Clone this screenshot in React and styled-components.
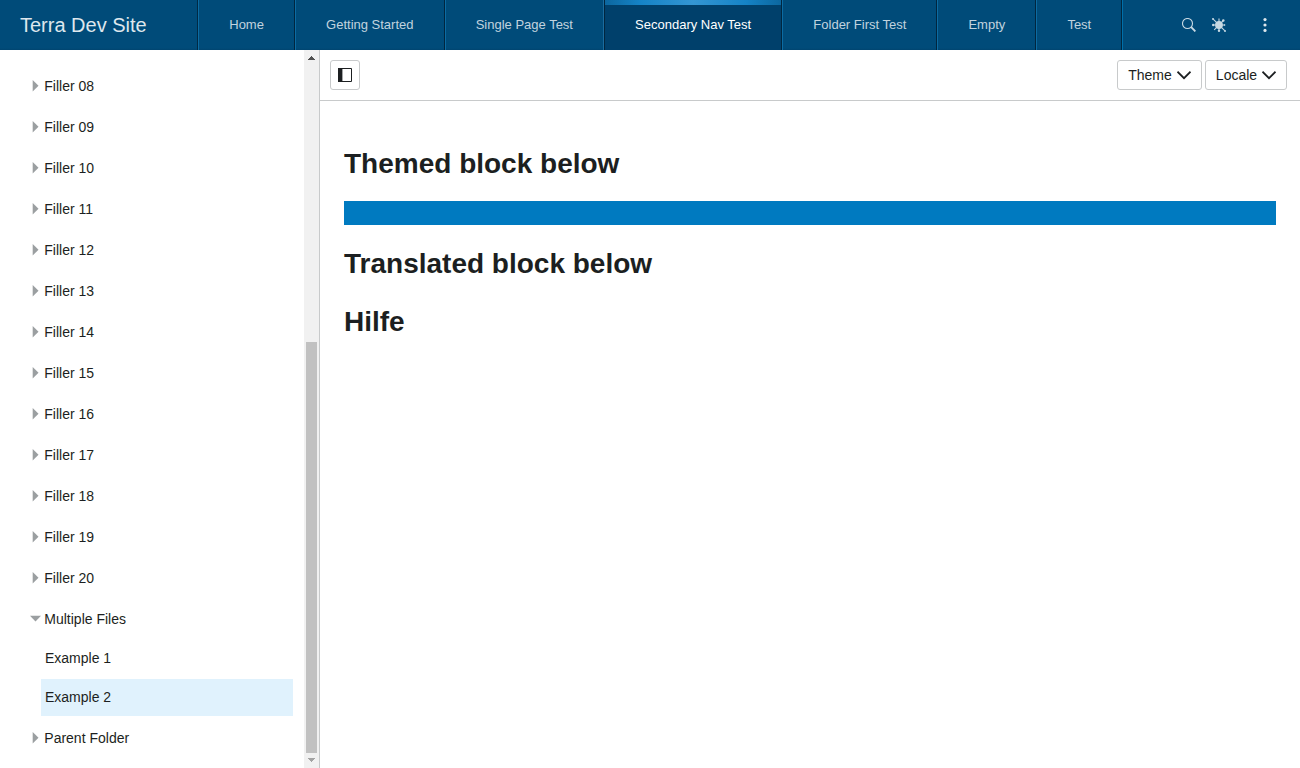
import React from 'react';
import styled, { createGlobalStyle } from 'styled-components';

const GlobalStyle = createGlobalStyle`
  *, *::before, *::after { box-sizing: border-box; }
  body {
    margin: 0;
    background: #fff;
    color: #1c1f21;
    font-family: 'Liberation Sans', Arial, sans-serif;
    font-size: 14px;
  }
  button { font: inherit; color: inherit; margin: 0; cursor: pointer; }
`;

const Page = styled.div`
  display: flex;
  flex-direction: column;
  height: 100vh;
  overflow: hidden;
`;

const Header = styled.header`
  display: flex;
  flex: 0 0 50px;
  background: linear-gradient(to bottom, transparent 48px, rgba(0, 30, 60, 0.15) 50px), #004b79;
  color: #c8dae4;
`;

const Brand = styled.div`
  width: 198.2px;
  padding-left: 20px;
  border-right: 1px solid #002a45;
  font-size: 20px;
  line-height: 50px;
  color: #dee7ed;
`;

const Tabs = styled.nav`
  display: flex;
  border-right: 1px solid #006fa9;
`;

const Tab = styled.a`
  padding: 0 30.07px;
  border-left: 1px solid ${(p) => (p.$active ? '#01263f' : '#0c6ba2')};
  border-right: 1px solid ${(p) => (p.$beforeActive ? '#1b6c9e' : '#01263f')};
  font-size: 13px;
  line-height: 50px;
  white-space: nowrap;
  color: ${(p) => (p.$active ? '#fff' : '#c1d3df')};
  background: ${(p) =>
    p.$active
      ? 'linear-gradient(to right, #0c679f 0%, #1583c6 20%, #3496d3 50%, #1583c6 80%, #0c679f 100%) top / 100% 5px no-repeat, #00406b'
      : 'transparent'};
`;

const Tools = styled.div`
  display: flex;
  align-items: center;
  margin-left: auto;
  padding-right: 28px;
`;

const ToolButton = styled.button`
  display: flex;
  padding: 0;
  border: 0;
  background: none;
  margin-left: ${(p) => p.$gap || 0}px;
`;

const Body = styled.div`
  display: flex;
  flex: 1;
  min-height: 0;
`;

const Sidebar = styled.aside`
  display: flex;
  flex: 0 0 320px;
  border-right: 1px solid #c8cacb;
`;

const Menu = styled.div`
  flex: 1;
  padding: 16px 11px 0 30px;
`;

const MenuRow = styled.div`
  display: flex;
  align-items: center;
  height: 41px;
  padding-bottom: 2px;
  gap: 3.3px;
`;

const ChildList = styled.div`
  display: flex;
  flex-direction: column;
  gap: 2px;
  padding: 0 0 2px 11px;
`;

const ChildRow = styled.div`
  height: 37px;
  padding-left: 4px;
  line-height: 37px;
  background: ${(p) => (p.$selected ? '#e0f2fd' : 'transparent')};
`;

const ScrollTrack = styled.div`
  display: flex;
  flex-direction: column;
  justify-content: space-between;
  width: 15px;
  background: #f1f1f1;
`;

const ScrollThumb = styled.div`
  height: 411px;
  margin: auto 2px 0;
  background: #c1c1c1;
`;

const ScrollArrow = styled.svg`
  display: block;
  width: 15px;
  height: 15px;
`;

const Main = styled.main`
  flex: 1;
  min-width: 0;
`;

const Toolbar = styled.div`
  display: flex;
  align-items: center;
  height: 51px;
  padding: 0 13px 0 10px;
  border-bottom: 1px solid #c8cacb;
`;

const BarButton = styled.button`
  display: flex;
  align-items: center;
  justify-content: center;
  gap: 5px;
  width: ${(p) => p.$width}px;
  height: 30px;
  padding: 0;
  margin-left: ${(p) => p.$left || 0};
  border: 1px solid #c8cacb;
  border-radius: 3px;
  background: #fff;
`;

const Content = styled.section`
  padding: 24px;
`;

const Heading = styled.h1`
  margin: ${(p) => p.$top}px 0 0;
  font-size: 28px;
  line-height: 34px;
  font-weight: 700;
`;

const ThemedBlock = styled.div`
  height: 24px;
  margin-top: 20px;
  background: #007ac0;
`;

const tabs = ['Home', 'Getting Started', 'Single Page Test', 'Secondary Nav Test', 'Folder First Test', 'Empty', 'Test'];
const activeTab = 3;
const fillers = Array.from({ length: 13 }, (_, i) => `Filler ${String(i + 8).padStart(2, '0')}`);

const Caret = ({ open }) => (
  <svg width="11" height="13" viewBox="0 0 11 13" fill="#9b9fa1">
    <path d={open ? 'M0 3.8H11L5.5 9.5z' : 'M2.7 .9V12.4L8.5 6.65z'} />
  </svg>
);

const Chevron = () => (
  <svg width="14" height="14" viewBox="0 0 14 14" fill="none" stroke="#1c1f21" strokeWidth="1.75">
    <path d="M.5 3.7 7 10.2l6.5-6.5" />
  </svg>
);

const SearchIcon = () => (
  <svg width="14" height="14" viewBox="0 0 14 14" fill="none" stroke="#c8dae4">
    <circle cx="5.5" cy="5.5" r="5" strokeWidth="1.1" />
    <path d="m9.2 9.2 4.2 4.2" strokeWidth="1.9" />
  </svg>
);

const BugIcon = () => (
  <svg width="14" height="14" viewBox="0 0 14 14" fill="#c8dae4">
    <path d="M7 .5V13M1 7h12M.7.7l12 12M11.3 2.7 2.2 11.8" stroke="#c8dae4" strokeWidth="1.1" />
    <circle cx="7" cy="7" r="3.9" />
    <circle cx="11.3" cy="2.6" r="1.25" />
    <circle cx="1.2" cy="7" r="1.2" />
    <circle cx="7" cy="12.8" r="1.2" />
    <circle cx="13" cy="13" r="1" />
    <circle cx="1" cy="1" r=".9" />
    <circle cx="12.6" cy="7" r=".8" />
  </svg>
);

const MoreIcon = () => (
  <svg width="14" height="14" viewBox="0 0 14 14" fill="#dee7ed">
    <circle cx="7" cy="1.6" r="1.6" />
    <circle cx="7" cy="7" r="1.6" />
    <circle cx="7" cy="12.4" r="1.6" />
  </svg>
);

const PanelIcon = () => (
  <svg width="14" height="14" viewBox="0 0 14 14">
    <path d="M.5.5h13v13H.5z" fill="#fff" stroke="#1c1f21" />
    <path d="M0 0h4v14H0z" fill="#1c1f21" />
    <path d="M4 1h1v12H4z" fill="#a4a6a7" />
  </svg>
);

export default function App() {
  return (
    <Page>
      <GlobalStyle />
      <Header>
        <Brand>Terra Dev Site</Brand>
        <Tabs>
          {tabs.map((label, i) => (
            <Tab key={label} $active={i === activeTab} $beforeActive={i === activeTab - 1}>
              {label}
            </Tab>
          ))}
        </Tabs>
        <Tools>
          <ToolButton aria-label="Search"><SearchIcon /></ToolButton>
          <ToolButton aria-label="Extension" $gap={16}><BugIcon /></ToolButton>
          <ToolButton aria-label="More" $gap={32}><MoreIcon /></ToolButton>
        </Tools>
      </Header>
      <Body>
        <Sidebar>
          <Menu>
            {fillers.map((label) => (
              <MenuRow key={label}><Caret />{label}</MenuRow>
            ))}
            <MenuRow><Caret open />Multiple Files</MenuRow>
            <ChildList>
              <ChildRow>Example 1</ChildRow>
              <ChildRow $selected>Example 2</ChildRow>
            </ChildList>
            <MenuRow><Caret />Parent Folder</MenuRow>
          </Menu>
          <ScrollTrack>
            <ScrollArrow viewBox="0 0 15 15" shapeRendering="crispEdges"><path d="M4 10h7L7.5 6z" fill="#505050" /></ScrollArrow>
            <ScrollThumb />
            <ScrollArrow viewBox="0 0 15 15" shapeRendering="crispEdges"><path d="M4 5h7L7.5 9z" fill="#a3a3a3" /></ScrollArrow>
          </ScrollTrack>
        </Sidebar>
        <Main>
          <Toolbar>
            <BarButton $width={30} aria-label="Toggle menu"><PanelIcon /></BarButton>
            <BarButton $width={85} $left="auto">Theme<Chevron /></BarButton>
            <BarButton $width={82} $left="3px">Locale<Chevron /></BarButton>
          </Toolbar>
          <Content>
            <Heading $top={22}>Themed block below</Heading>
            <ThemedBlock />
            <Heading $top={22}>Translated block below</Heading>
            <Heading $top={24}>Hilfe</Heading>
          </Content>
        </Main>
      </Body>
    </Page>
  );
}
